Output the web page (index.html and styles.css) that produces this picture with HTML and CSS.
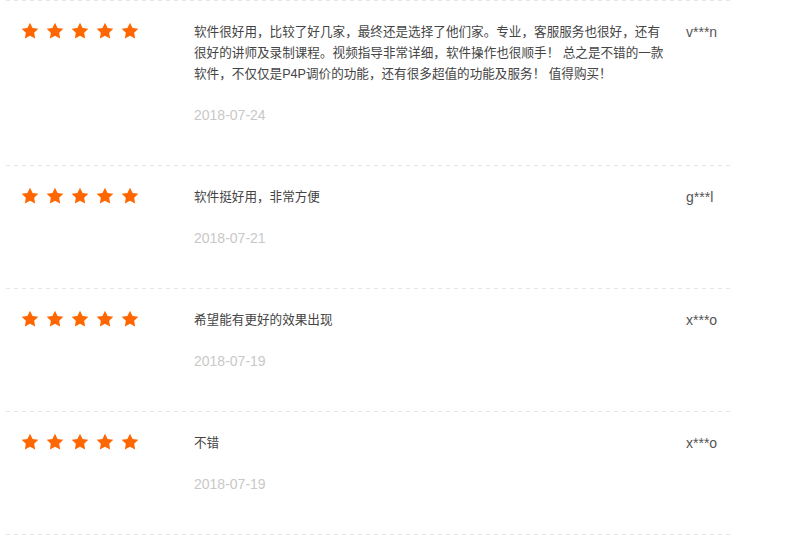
FILE: index.html
```html
<!DOCTYPE html>
<html lang="zh-CN">
<head>
<meta charset="utf-8">
<title>评价</title>
<link rel="stylesheet" href="styles.css">
</head>
<body>
<svg width="0" height="0" class="defs" aria-hidden="true">
  <defs>
    <symbol id="star" viewBox="0 0 24 24">
      <path d="M12 2l3.09 6.26L22 9.27l-5 4.87 1.18 6.88L12 17.77l-6.18 3.25L7 14.14 2 9.27l6.91-1.01L12 2z"/>
    </symbol>
  </defs>
</svg>
<ul class="reviews">
  <li class="review">
    <div class="stars">
      <svg class="star"><use href="#star"/></svg><svg class="star"><use href="#star"/></svg><svg class="star"><use href="#star"/></svg><svg class="star"><use href="#star"/></svg><svg class="star"><use href="#star"/></svg>
    </div>
    <div class="body">
      <p class="text">软件很好用，比较了好几家，最终还是选择了他们家。专业，客服服务也很好，还有很好的讲师及录制课程。视频指导非常详细，软件操作也很顺手！ 总之是不错的一款软件，不仅仅是P4P调价的功能，还有很多超值的功能及服务！ 值得购买！</p>
      <p class="date">2018-07-24</p>
    </div>
    <div class="user">v***n</div>
  </li>
  <li class="review">
    <div class="stars">
      <svg class="star"><use href="#star"/></svg><svg class="star"><use href="#star"/></svg><svg class="star"><use href="#star"/></svg><svg class="star"><use href="#star"/></svg><svg class="star"><use href="#star"/></svg>
    </div>
    <div class="body">
      <p class="text">软件挺好用，非常方便</p>
      <p class="date">2018-07-21</p>
    </div>
    <div class="user">g***l</div>
  </li>
  <li class="review">
    <div class="stars">
      <svg class="star"><use href="#star"/></svg><svg class="star"><use href="#star"/></svg><svg class="star"><use href="#star"/></svg><svg class="star"><use href="#star"/></svg><svg class="star"><use href="#star"/></svg>
    </div>
    <div class="body">
      <p class="text">希望能有更好的效果出现</p>
      <p class="date">2018-07-19</p>
    </div>
    <div class="user">x***o</div>
  </li>
  <li class="review">
    <div class="stars">
      <svg class="star"><use href="#star"/></svg><svg class="star"><use href="#star"/></svg><svg class="star"><use href="#star"/></svg><svg class="star"><use href="#star"/></svg><svg class="star"><use href="#star"/></svg>
    </div>
    <div class="body">
      <p class="text">不错</p>
      <p class="date">2018-07-19</p>
    </div>
    <div class="user">x***o</div>
  </li>
</ul>
</body>
</html>
```

FILE: styles.css
```css
html, body {
  margin: 0;
  padding: 0;
  background: #fff;
}

body {
  font-family: "Liberation Sans", "Noto Sans CJK SC", Arial, sans-serif;
  color: #444;
}

.defs {
  position: absolute;
  width: 0;
  height: 0;
  overflow: hidden;
}

.reviews {
  list-style: none;
  margin: 0 0 0 6px;
  padding: 1px 0 0 0;
  width: 727px;
  background-image: repeating-linear-gradient(to right, #e6e6e6 0 4px, transparent 4px 8px);
  background-size: 100% 1px;
  background-repeat: no-repeat;
  background-position: 0 0;
}

.review {
  display: flex;
  align-items: flex-start;
  padding: 21px 0 40px 0;
  background-image: repeating-linear-gradient(to right, #e6e6e6 0 4px, transparent 4px 8px);
  background-size: 100% 1px;
  background-repeat: no-repeat;
  background-position: 0 100%;
}

.stars {
  display: flex;
  gap: 5px;
  width: 174px;
  padding-left: 14px;
  margin-top: -1px;
  flex: none;
}

.star {
  width: 20px;
  height: 20px;
  fill: #ff6600;
  display: block;
}

.body {
  width: 472px;
  flex: none;
}

.text {
  margin: 0;
  font-size: 12.6px;
  line-height: 21px;
  color: #444;
  font-family: "Liberation Sans", "Noto Sans CJK SC", sans-serif;
}

.date {
  margin: 20px 0 0 0;
  font-size: 14px;
  line-height: 21px;
  color: #c8c8c8;
}

.user {
  margin-left: 20px;
  font-size: 14px;
  line-height: 21px;
  color: #555;
}
```
